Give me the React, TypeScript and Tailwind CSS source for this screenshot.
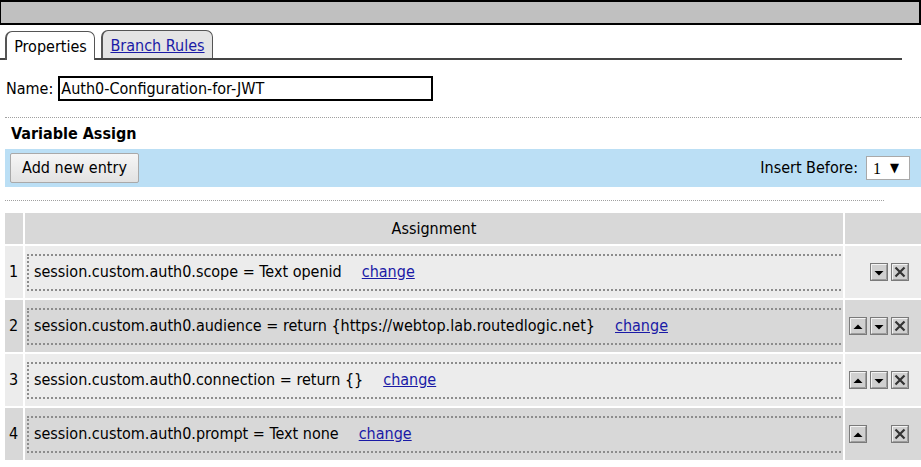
import React from "react";

type Kind = "up" | "down" | "x";

function IconBtn({ kind }: { kind: Kind }) {
  return (
    <svg width="18" height="18" viewBox="0 0 18 18" className="block">
      <rect x="0.5" y="0.5" width="17" height="17" fill="#d0d0d0" stroke="#7a7a7a" />
      <path d="M1.5 16V1.5H16" stroke="#f4f4f4" fill="none" />
      <path d="M2 16.5H16.5V2" stroke="#9c9c9c" fill="none" />
      {kind === "up" && <path d="M4.5 12L9 7.5L13.5 12Z" fill="#000" />}
      {kind === "down" && <path d="M4.5 8H13.5L9 12.5Z" fill="#000" />}
      {kind === "x" && (
        <path d="M4.5 4.5L13.5 13.5M13.5 4.5L4.5 13.5" stroke="#333" strokeWidth="2.2" />
      )}
    </svg>
  );
}

const rows: { text: string; up: boolean; down: boolean }[] = [
  { text: "session.custom.auth0.scope = Text openid", up: false, down: true },
  {
    text: "session.custom.auth0.audience = return {https://webtop.lab.routedlogic.net}",
    up: true,
    down: true,
  },
  { text: "session.custom.auth0.connection = return {}", up: true, down: true },
  { text: "session.custom.auth0.prompt = Text none", up: true, down: false },
];

export default function App() {
  return (
    <div
      className="w-[921px] h-[467px] overflow-hidden bg-white text-[16px] text-black font-stretch-condensed"
      style={{ fontFamily: '"DejaVu Sans Condensed", "DejaVu Sans", sans-serif' }}
    >
      {/* top bar */}
      <div className="h-[25px] bg-[#c0c0c0] border-t-2 border-b-2 border-l border-r-2 border-black" />

      {/* tabs */}
      <div className="mt-[6px] mr-[19px] h-[29px] flex items-end gap-[6px] pl-[5px] border-b-2 border-[#444]">
        <div className="relative z-10 -mb-[2px] h-[29px] w-[90px] bg-white border border-b-0 border-[#555] border-l-2 rounded-t-[7px] flex items-center justify-center pt-[2px]">
          Properties
        </div>
        <div className="h-[28px] w-[112px] bg-[#e4e4e4] border border-b-0 border-[#555] border-l-2 rounded-t-[7px] flex items-center justify-center pt-[3px]">
          <a href="#" className="text-[#1a1aa6] underline">
            Branch Rules
          </a>
        </div>
      </div>

      {/* name row */}
      <div className="mt-[16px] flex items-center pl-[6px] h-[25px]">
        <span className="pt-[1px]">Name:</span>
        <div className="ml-[5px] w-[375px] h-[25px] border-2 border-black flex items-center px-[1px] leading-none">
          Auth0-Configuration-for-JWT
        </div>
      </div>

      <div className="mt-[16px] ml-[5px] border-t border-dotted border-[#a0a0a0]" />

      <div className="h-[31px] flex items-center pl-[11px] font-bold">Variable Assign</div>

      {/* blue bar */}
      <div className="ml-[5px] h-[38px] bg-[#bbdff5] flex items-center justify-between pl-[5px] pr-[11px]">
        <button className="h-[30px] w-[129px] border border-[#a9a9a9] rounded-[2px] bg-gradient-to-b from-[#f6f6f6] to-[#e2e2e2] text-[16px]">
          Add new entry
        </button>
        <div className="flex items-center">
          <span>Insert Before:</span>
          <div className="ml-[8px] w-[44px] h-[24px] bg-white border border-[#a9a9a9] flex items-center pl-[6px] gap-[9px]">
            <span className="text-[#000] pt-[2px]" style={{ fontFamily: '"Liberation Serif", serif' }}>
              1
            </span>
            <span className="text-[13px]">▼</span>
          </div>
        </div>
      </div>

      <div className="mt-[13px] ml-[5px] w-[879px] border-t border-dotted border-[#a0a0a0]" />

      {/* table */}
      <div className="mt-[12px] ml-[5px] grid grid-cols-[18px_818px_76px] gap-[2px]">
        <div className="h-[31px] bg-[#d8d8d8]" />
        <div className="h-[31px] bg-[#d8d8d8] flex items-center justify-center">Assignment</div>
        <div className="h-[31px] bg-[#d8d8d8]" />
        {rows.map((r, i) => {
          const bg = i % 2 === 0 ? "bg-[#ececec]" : "bg-[#d8d8d8]";
          return (
            <React.Fragment key={i}>
              <div className={`h-[52px] ${bg} flex items-center pl-[4px]`}>{i + 1}</div>
              <div className={`h-[52px] ${bg} overflow-hidden flex items-center pl-[2px]`}>
                <div className="h-[37px] w-[830px] shrink-0 border-2 border-dotted border-[#8c8c8c] flex items-center pl-[5px]">
                  <span>{r.text}</span>
                  <a href="#" className="ml-[20px] text-[#1a1aa6] underline">
                    change
                  </a>
                </div>
              </div>
              <div className={`h-[52px] ${bg} flex items-center pl-[4px] gap-[3px]`}>
                <div className="w-[18px] h-[18px]">{r.up && <IconBtn kind="up" />}</div>
                <div className="w-[18px] h-[18px]">{r.down && <IconBtn kind="down" />}</div>
                <IconBtn kind="x" />
              </div>
            </React.Fragment>
          );
        })}
      </div>
    </div>
  );
}
